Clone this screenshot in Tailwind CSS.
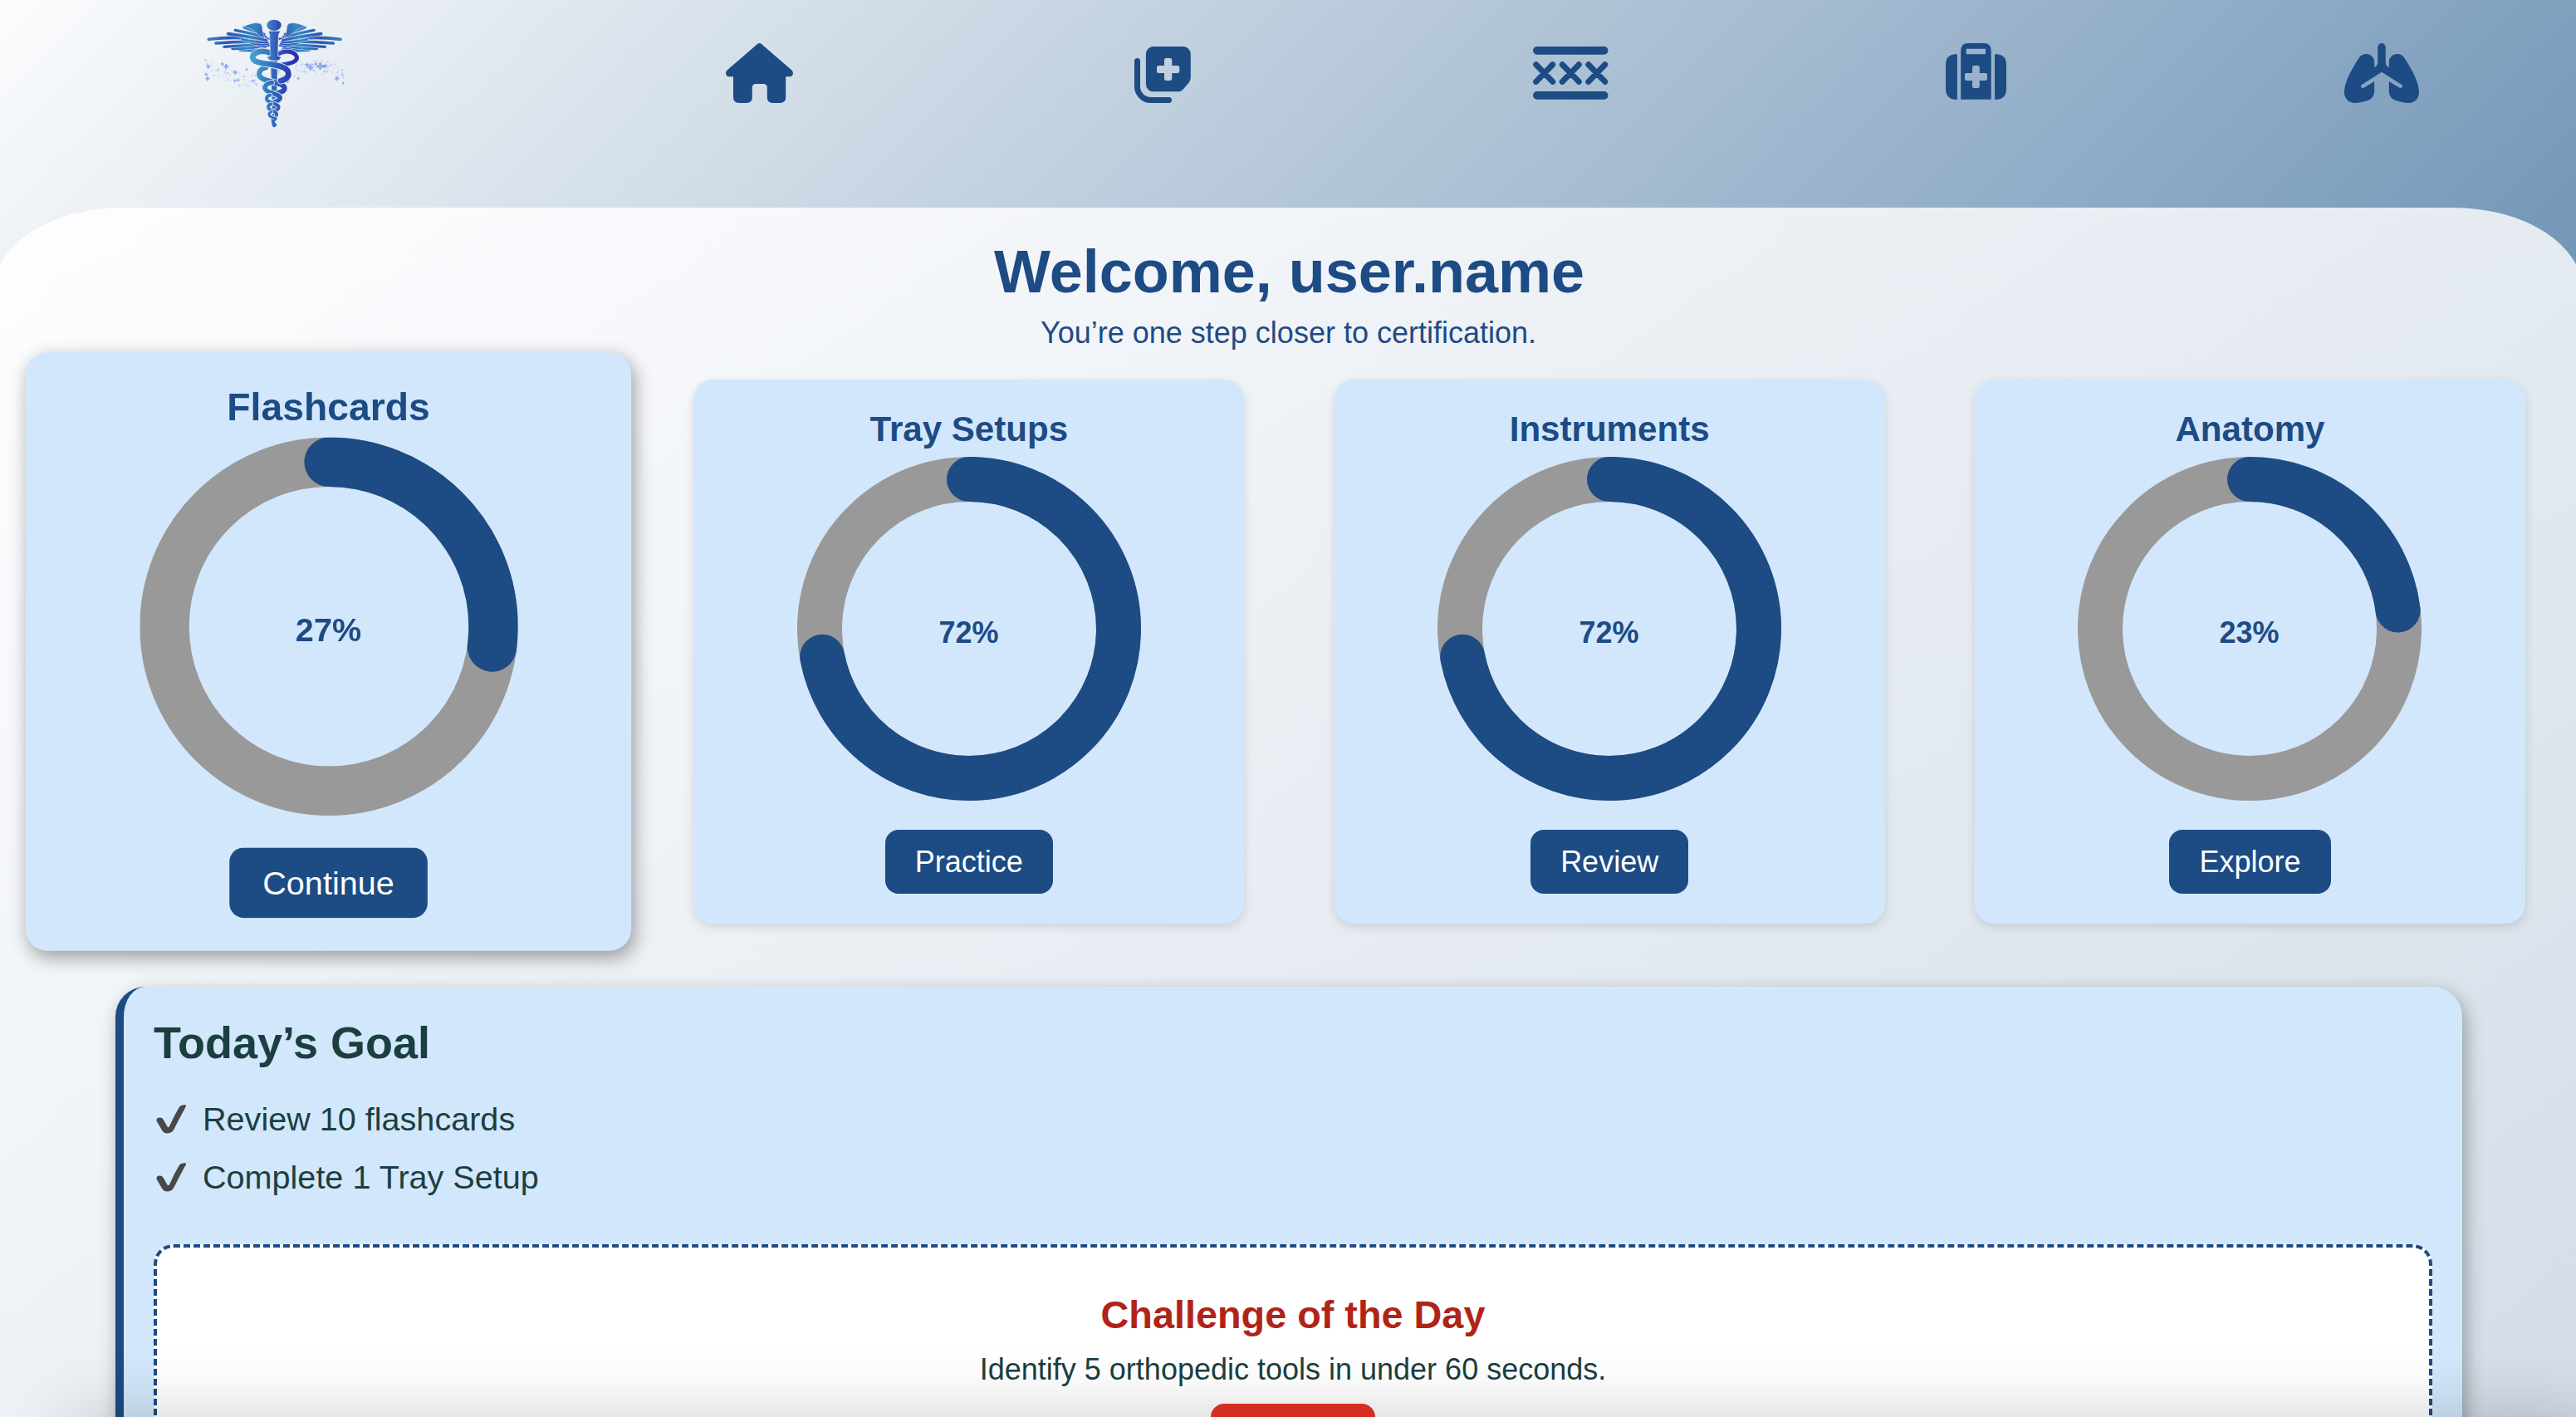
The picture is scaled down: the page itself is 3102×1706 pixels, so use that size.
<!DOCTYPE html>
<html lang="en">
<head>
<meta charset="utf-8">
<title>Dashboard</title>
<script src="https://cdn.jsdelivr.net/npm/@tailwindcss/browser@4"></script>
</head>
<body class="bg-white">
<div class="relative h-[1706px] w-[3102px] overflow-hidden font-['Liberation_Sans',Arial,sans-serif] text-[36px] text-[#1d4b84]">

  <header class="flex h-[410px] items-start bg-[linear-gradient(135deg,#fbfcfd,#7094b6)] pl-[220px] text-[#1d4b84]">
    <svg class="h-[170px] w-[220px]" viewBox="0 0 660 510" fill="none">
      <defs>
        <linearGradient id="wl" gradientUnits="userSpaceOnUse" x1="85" y1="120" x2="320" y2="180"><stop offset="0" stop-color="#3a86c2"/><stop offset=".35" stop-color="#2c56b6"/><stop offset=".65" stop-color="#3786c2"/><stop offset="1" stop-color="#2b3fb2"/></linearGradient>
        <linearGradient id="sn" gradientUnits="userSpaceOnUse" x1="250" y1="0" x2="400" y2="0"><stop offset="0" stop-color="#45a0cc"/><stop offset=".5" stop-color="#2e6cbd"/><stop offset="1" stop-color="#2a2fae"/></linearGradient>
        <linearGradient id="st" gradientUnits="userSpaceOnUse" x1="305" y1="0" x2="358" y2="0"><stop offset="0" stop-color="#3d86c6"/><stop offset="1" stop-color="#2c3fb2"/></linearGradient>
      </defs>
      <g id="sparks"></g>
      <g id="wings" stroke-linecap="round"></g>
      <path d="M318 205h24l-4 228h-14z" fill="url(#st)"/>
      <g id="snakes" stroke-linecap="round"></g>
      <path d="M309 112h44l-7 14 -2 76 12 4-8 12h-34l-10-12 12-4-2-76z" fill="url(#st)" stroke="#e9eef3" stroke-width="2"/>
      <ellipse cx="330" cy="91" rx="26" ry="20" fill="url(#st)"/>
      <path d="M319 430l18 2-5 10 7 6-2 9q-6 5-13 0z" fill="url(#st)"/>
    </svg>
    <svg class="mt-[52px] ml-[434px] h-[72px] w-[81px]" viewBox="0 0 81 72" fill="currentColor"><path d="M37.8 1.2q2.7-2.4 5.4 0L79.4 32.4q1.6 1.600 1.6 3.700 0 4.200-4.800 4.200H72.200V65q0 7-7 7H56.500q-6.700 0-6.700-7V53.500q0-4.500-4.500-4.500H36.300q-4.500 0-4.500 4.500V65q0 7-7 7H16q-7 0-7-7V40.300H4.800Q0 40.300 0 36.100 0 34 1.600 32.400z"/></svg>
    <svg class="mt-[56px] ml-[411px] h-[68px] w-[68px]" viewBox="0 0 68 68"><path fill="currentColor" fill-rule="evenodd" d="M22.900 0H58.800a9 9 0 0 1 9 9V37.500q0 3.500-2.600 6.500L58.500 51.700Q56.300 54.300 53 54.300H22.900a9 9 0 0 1-9-9V9a9 9 0 0 1 9-9zM38.300 14q-2.300 0-2.300 2.300V23H29.300Q27 23 27 25.300V29.700Q27 32 29.300 32H36V38.700Q36 41 38.300 41H43Q45.300 41 45.300 38.700V32H52Q54.300 32 54.300 29.700V25.300Q54.300 23 52 23H45.300V16.300Q45.300 14 43 14z"/><path d="M3.500 17.500V48A16.500 16.500 0 0 0 20 64.500H41.500" fill="none" stroke="currentColor" stroke-width="7" stroke-linecap="round"/></svg>
    <svg class="mt-[56px] ml-[412px] h-[64px] w-[91px]" viewBox="0 0 91 64" fill="none" stroke="currentColor" stroke-linecap="round"><path stroke-width="9.6" d="M4.800 4.850H85.700M4.800 58.900H85.700"/><path stroke-width="7" d="M3.700 21.700L23.700 42.400M23.700 21.700L3.700 42.400M35.300 21.700L55.300 42.400M55.300 21.700L35.300 42.400M66.800 21.700L86.800 42.400M86.800 21.700L66.800 42.400"/></svg>
    <svg class="mt-[52px] ml-[406px] h-[68px] w-[73px]" viewBox="0 0 73 68" fill="currentColor"><path d="M13.900 13.200V67.700H10.500Q0 66.700 0 55.500V25.500Q0 14.200 10.500 13.200zM59 13.200V67.700H62.500Q73 66.700 73 55.500V25.500Q73 14.200 62.500 13.200z"/><path fill-rule="evenodd" d="M18.200 67.700V9Q18.200 0 27 0H46Q54.700 0 54.700 9V67.700zM24.800 6.700V13.200H48V6.700zM34 27Q32 27 32 29V36H25.200Q23 36 23 38V43Q23 45 25.200 45H32V52Q32 54 34 54H38.800Q40.800 54 40.800 52V45H47.800Q50 45 50 43V38Q50 36 47.800 36H40.800V29Q40.800 27 38.800 27z"/></svg>
    <svg class="mt-[52px] ml-[407px] h-[72px] w-[90px]" viewBox="0 0 90.300 72" fill="currentColor"><path d="M40.400 4.700A4.700 4.700 0 0 1 49.900 4.700V22.500Q50.100 27.500 54 29.300V23C54 17.500 58 13 63.700 13C67.700 13 70.800 14.700 73.200 18.400C82.500 33 90.300 48 90.300 59C90.300 67 84.800 72 77.500 72C73 72 67 70.300 61.500 68.800C57 67.200 54 63 54 58V46L66.300 53.600C69.300 55.200 71.700 52 69.300 50.100L45.150 34.700L21 50.100C18.600 52 21 55.200 24 53.600L36.300 46V58C36.300 63 33.300 67.200 28.800 68.800C23.300 70.300 17.300 72 12.800 72C5.500 72 0 67 0 59C0 48 7.800 33 17.100 18.400C19.500 14.700 22.600 13 26.600 13C32.300 13 36.300 17.500 36.300 23V29.300Q40.200 27.500 40.400 22.500z"/></svg>
  </header>

  <main class="-mx-[8px] -mt-[160px] h-[1600px] rounded-t-[156px_100px] bg-[linear-gradient(145deg,#fefeff,#d2dce7)] px-[8px] pt-[35px]">
    <h1 class="pl-[3px] text-center text-[72px] leading-[84px] font-bold">Welcome, user.name</h1>
    <p class="mt-[10px] pl-px text-center leading-[44px]">You’re one step closer to certification.</p>

    <section class="mt-[34px] flex justify-between pr-[61px] pl-[64px]">
      <article class="flex w-[663px] scale-110 flex-col items-center rounded-[24px] bg-[#d2e7fb] pt-[35px] pb-[36px] shadow-[3px_7px_20px_rgba(0,0,0,0.36)]">
        <h3 class="text-[42.1px] leading-[50px] font-bold">Flashcards</h3>
        <svg class="mt-2 size-[414px]" viewBox="0 0 414 414" fill="none" stroke-width="54"><circle cx="207" cy="207" r="180" stroke="#999999"/><circle cx="207" cy="207" r="180" stroke="#1d4b84" pathLength="100" stroke-dasharray="27 100" stroke-linecap="round" transform="rotate(-90 207 207)"/><text x="206.500" y="223" text-anchor="middle" font-size="36" font-weight="700" fill="#1d4b84">27%</text></svg>
        <button class="mt-[35px] h-[77px] rounded-[16px] bg-[#1d4b84] px-[36px] text-white">Continue</button>
      </article>
      <article class="flex w-[663px] flex-col items-center rounded-[24px] bg-[#d2e7fb] pt-[35px] pb-[36px] shadow-[0_4px_12px_rgba(0,0,0,0.12)]">
        <h3 class="text-[42.1px] leading-[50px] font-bold">Tray Setups</h3>
        <svg class="mt-2 size-[414px]" viewBox="0 0 414 414" fill="none" stroke-width="54"><circle cx="207" cy="207" r="180" stroke="#999999"/><circle cx="207" cy="207" r="180" stroke="#1d4b84" pathLength="100" stroke-dasharray="72 100" stroke-linecap="round" transform="rotate(-90 207 207)"/><text x="206.500" y="224" text-anchor="middle" font-size="36" font-weight="700" fill="#1d4b84">72%</text></svg>
        <button class="mt-[35px] h-[77px] rounded-[16px] bg-[#1d4b84] px-[36px] text-white">Practice</button>
      </article>
      <article class="flex w-[663px] flex-col items-center rounded-[24px] bg-[#d2e7fb] pt-[35px] pb-[36px] shadow-[0_4px_12px_rgba(0,0,0,0.12)]">
        <h3 class="text-[42.1px] leading-[50px] font-bold">Instruments</h3>
        <svg class="mt-2 size-[414px]" viewBox="0 0 414 414" fill="none" stroke-width="54"><circle cx="207" cy="207" r="180" stroke="#999999"/><circle cx="207" cy="207" r="180" stroke="#1d4b84" pathLength="100" stroke-dasharray="72 100" stroke-linecap="round" transform="rotate(-90 207 207)"/><text x="206.500" y="224" text-anchor="middle" font-size="36" font-weight="700" fill="#1d4b84">72%</text></svg>
        <button class="mt-[35px] h-[77px] rounded-[16px] bg-[#1d4b84] px-[36px] text-white">Review</button>
      </article>
      <article class="flex w-[663px] flex-col items-center rounded-[24px] bg-[#d2e7fb] pt-[35px] pb-[36px] shadow-[0_4px_12px_rgba(0,0,0,0.12)]">
        <h3 class="text-[42.1px] leading-[50px] font-bold">Anatomy</h3>
        <svg class="mt-2 size-[414px]" viewBox="0 0 414 414" fill="none" stroke-width="54"><circle cx="207" cy="207" r="180" stroke="#999999"/><circle cx="207" cy="207" r="180" stroke="#1d4b84" pathLength="100" stroke-dasharray="23 100" stroke-linecap="round" transform="rotate(-90 207 207)"/><text x="206.500" y="224" text-anchor="middle" font-size="36" font-weight="700" fill="#1d4b84">23%</text></svg>
        <button class="mt-[35px] h-[77px] rounded-[16px] bg-[#1d4b84] px-[36px] text-white">Explore</button>
      </article>
    </section>

    <section class="mt-[76px] ml-[139px] h-[900px] w-[2826px] rounded-[36px] border-l-[10px] border-[#1d4b84] bg-[#d2e7fb] px-[36px] pt-[35px] text-[#1b3f3f] shadow-[4px_8px_22px_rgba(0,0,0,0.32)]">
      <h2 class="text-[54px] leading-[64px] font-bold">Today’s Goal</h2>
      <ul class="mt-[25px] text-[39.6px] leading-[70px]">
        <li class="flex items-center gap-[20px] pl-[3px]"><svg class="h-[35px] w-[36px]" viewBox="0 0 36 35"><path fill="#484848" d="M0.500 19.500Q0 16.200 3.500 15.600 6.800 14.800 8.600 17.800L13.500 26.500Q14.600 28 15.800 26.500 21.500 13.500 27.500 3.500 29.500 0 35.500 0.300 36.500 0.800 35.500 2.800 27.500 17.500 21.500 29.500 19 34.500 12.800 34.500 9.500 34.500 7.500 31.500z"/></svg><span>Review 10 flashcards</span></li>
        <li class="flex items-center gap-[20px] pl-[3px]"><svg class="h-[35px] w-[36px]" viewBox="0 0 36 35"><path fill="#484848" d="M0.500 19.500Q0 16.200 3.500 15.600 6.800 14.800 8.600 17.800L13.500 26.500Q14.600 28 15.800 26.500 21.500 13.500 27.500 3.500 29.500 0 35.500 0.300 36.500 0.800 35.500 2.800 27.500 17.500 21.500 29.500 19 34.500 12.800 34.500 9.500 34.500 7.500 31.500z"/></svg><span>Complete 1 Tray Setup</span></li>
      </ul>
      <div class="mt-[46px] flex h-[500px] flex-col items-center rounded-[24px] border-4 border-dashed border-[#1d4b84] bg-white pt-[53px]">
        <h3 class="text-[46.8px] leading-[56px] font-bold text-[#b02418]">Challenge of the Day</h3>
        <p class="mt-[16px] leading-[44px]">Identify 5 orthopedic tools in under 60 seconds.</p>
        <button class="mt-[19px] h-[77px] w-[198px] rounded-[16px] bg-[#e63323]" aria-label="Start"></button>
      </div>
    </section>
  </main>

  <div class="absolute top-[1706px] -right-[20px] left-[90px] h-[120px] shadow-[0_0_84px_rgba(0,0,0,0.2)]"></div>
</div>

<script>
const wings = document.getElementById('wings');
// Feathers sweep from the shoulder to the tip; each is drawn with a light outline beneath it.
const feathers = [
  ['M308 182Q296 190 262 186', 6], ['M300 176Q275 188 238 184', 9], ['M296 170Q262 186 206 180', 10],
  ['M296 164Q250 176 180 176', 10], ['M294 158Q235 164 150 169', 10], ['M292 152Q215 148 120 156', 10],
  ['M290 146Q200 128 94 142', 11], ['M314 164Q296 170 272 166', 6], ['M310 158Q280 164 246 156', 7],
  ['M306 152Q270 154 214 142', 8], ['M302 144Q250 134 164 122', 11], ['M300 134Q255 122 190 109', 10],
  ['M294 124Q258 112 222 99', 10]
];
const shoulder = 'M296 136Q290 126 288 104Q288 90 280 85Q262 79 240 88L217 97Q248 100 262 116Q276 128 296 138Q308 142 318 146L319 136Q306 136 296 136z';
let w = '';
for (const tf of ['', 'translate(664 0) scale(-1 1)']) {
  w += `<g transform="${tf}">`;
  for (const [d, s] of feathers) w += `<path d="${d}" stroke="#e6ecf4" stroke-width="${s + 3}"/><path d="${d}" stroke="url(#wl)" stroke-width="${s}"/>`;
  w += `<path d="${shoulder}" fill="url(#wl)" stroke="#e6ecf4" stroke-width="1.500"/></g>`;
}
wings.innerHTML = w;

const coils = [
  ['M348 193C394 174 424 202 408 218C396 232 372 230 350 236', 15],
  ['M300 244C272 250 268 276 292 286C324 298 366 300 368 318C368 334 346 334 334 338', 18],
  ['M314 190C272 176 240 198 258 218C276 236 352 226 378 254C390 276 372 288 354 292', 20],
  ['M322 298C298 302 290 318 304 328C322 340 350 340 352 354C350 364 338 366 330 368', 16],
  ['M316 344C298 348 300 362 314 368C332 376 350 378 346 390C344 398 334 400 328 402', 12],
  ['M320 376C306 378 306 392 318 398C332 404 344 408 338 418', 11],
  ['M320 404C308 410 310 419 322 423C330 427 338 425 336 430', 9]
];
document.getElementById('snakes').innerHTML = coils.map(([d, s]) =>
  `<path d="${d}" stroke="#e6ecf4" stroke-width="${s + 5}"/><path d="${d}" stroke="url(#sn)" stroke-width="${s}"/>`).join('');

let seed = 11;
const rnd = () => (seed = (seed * 16807) % 2147483647) / 2147483647;
const plus = (x, y, r, o) => `<path d="M${x - r} ${y}h${2 * r}M${x} ${y - r}v${2 * r}" stroke="#6a8bec" stroke-opacity="${o}" stroke-width="${r * .7}"/>`;
let sp = '';
for (let i = 0; i < 200; i++) {
  const x = 80 + rnd() * 503;
  const mid = x < 330 ? 258 + 32 * Math.sin((x - 130) / 75) : 262 - 22 * Math.sin((x - 370) / 62);
  sp += plus(x, mid + (rnd() - .5) * 52, 1.5 + rnd() * 3.5, .1 + rnd() * .28);
}
for (const [x, y, r] of [[143, 231, 6], [157, 240, 9], [85, 269, 6], [90, 284, 8], [200, 289, 6], [188, 292, 5], [231, 251, 5], [253, 293, 5], [450, 234, 7], [462, 244, 10], [497, 239, 13], [515, 238, 8], [481, 231, 6], [557, 284, 8], [379, 294, 7], [418, 283, 5], [580, 300, 5], [190, 262, 8], [92, 241, 7]]) sp += plus(x, y, r, .7);
document.getElementById('sparks').innerHTML = sp;
</script>
</body>
</html>
